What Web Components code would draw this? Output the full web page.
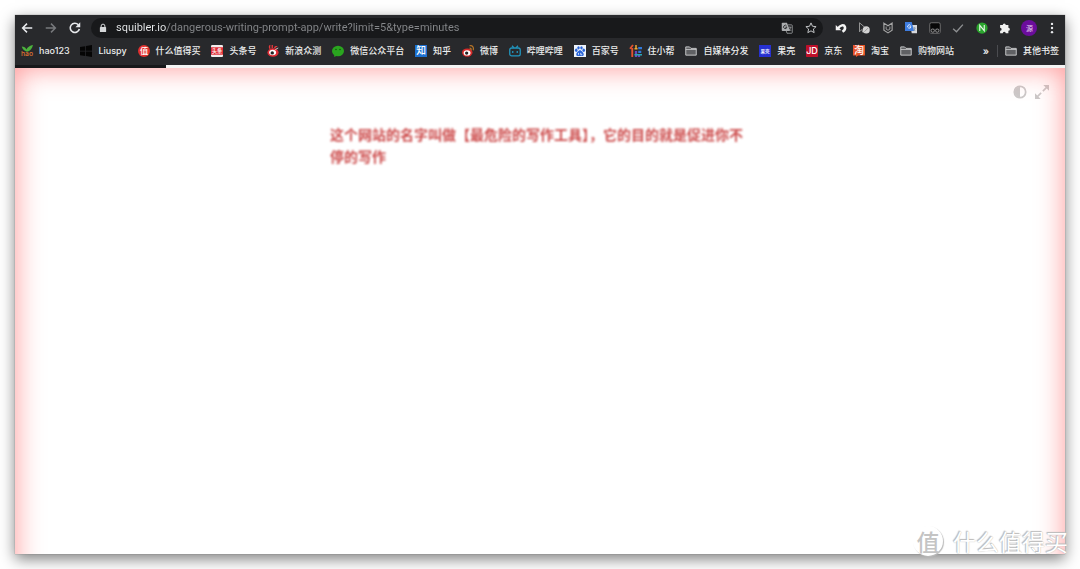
<!DOCTYPE html>
<html lang="zh-CN">
<head>
<meta charset="utf-8">
<meta name="viewport" content="width=device-width, initial-scale=1">
<title>squibler.io</title>
<style>
  body {
    margin: 0;
    padding: 15px;
    min-height: 100vh;
    box-sizing: border-box;
    display: flex;
    background: #fff;
    font-family: Inter, "Noto Sans CJK SC", sans-serif;
    overflow: hidden;
    position: relative;
  }
</style>
</head>
<body>
<browser-window>
  <browser-toolbar slot="chrome"></browser-toolbar>
  <bookmark-bar slot="chrome">
    <bookmark-link icon="hao">hao123</bookmark-link>
    <bookmark-link icon="windows">Liuspy</bookmark-link>
    <bookmark-link icon="zhi">什么值得买</bookmark-link>
    <bookmark-link icon="toutiao">头条号</bookmark-link>
    <bookmark-link icon="sina">新浪众测</bookmark-link>
    <bookmark-link icon="wechat">微信公众平台</bookmark-link>
    <bookmark-link icon="zhihu">知乎</bookmark-link>
    <bookmark-link icon="weibo">微博</bookmark-link>
    <bookmark-link icon="bili">哔哩哔哩</bookmark-link>
    <bookmark-link icon="baidu">百家号</bookmark-link>
    <bookmark-link icon="zhu">住小帮</bookmark-link>
    <bookmark-link icon="folder">自媒体分发</bookmark-link>
    <bookmark-link icon="guokr">果壳</bookmark-link>
    <bookmark-link icon="jd">京东</bookmark-link>
    <bookmark-link icon="taobao">淘宝</bookmark-link>
    <bookmark-link icon="folder">购物网站</bookmark-link>
    <bookmark-link slot="other" icon="folder">其他书签</bookmark-link>
  </bookmark-bar>
  <writing-page></writing-page>
</browser-window>
<site-watermark>什么值得买</site-watermark>

<script>
const ICONS = {
  back: '<path d="M14 8H3M8 3 3 8l5 5" fill="none" stroke="currentColor" stroke-width="1.7"/>',
  forward: '<path d="M2 8h11M8 3l5 5-5 5" fill="none" stroke="currentColor" stroke-width="1.7"/>',
  reload: '<path d="M13 9.2A5.3 5.3 0 1 1 11.8 4.3" fill="none" stroke="currentColor" stroke-width="1.8"/><path d="M14 1.5V7H8.5z" fill="currentColor"/>',
  lock: '<path d="M5 7V4.8a3 3 0 0 1 6 0V7" fill="none" stroke="currentColor" stroke-width="1.6"/><rect x="3" y="6.5" width="10" height="8" rx="1" fill="currentColor"/>',
  translate: '<path d="M2 1h6l4 11H2a1 1 0 0 1-1-1V2a1 1 0 0 1 1-1z" fill="#aaacae"/><path d="M7.6 5.6A2.2 2.2 0 1 0 7.8 7H5.7" fill="none" stroke="#18191b" stroke-width="1.1"/><path d="M9 3.8h5a1 1 0 0 1 1 1V14a1 1 0 0 1-1 1H8l-1-3" fill="none" stroke="#aaacae"/><path d="M9.5 7H14M11.8 6v1m1.2 0c-.4 2-1.5 3.4-3 4.6M11 9l2.6 3" stroke="#aaacae" fill="none" stroke-width=".9"/>',
  star: '<path d="M8 1.2l2 4.5 4.8.5-3.6 3.200 1 4.800L8 11.800l-4.200 2.400 1-4.800L1.200 6.200 6 5.700z" fill="none" stroke="#c4c6c8" stroke-width="1.3"/>',
  undo: '<path d="M1 4v7h7.500" fill="#f4f4f4"/><path d="M4 8.500C7 4 12 3 13.200 6.500 14 9 12.500 11.500 10 13" fill="none" stroke="#f4f4f4" stroke-width="3.400"/>',
  cursor: '<path d="M2 1v12l3-3 1.500 4M2 1l8 7" fill="none" stroke="#aaa" stroke-width="1.1"/><circle cx="11" cy="10.500" r="4.700" fill="#d3d3d3"/><path d="M8.500 13l5-5" stroke="#888" stroke-width="1"/>',
  shield: '<path d="M2.500 1.500 8 5l5.500-3.500V11L8 14.500 2.500 11z" fill="none" stroke="#a6a6a6" stroke-width="1.500"/><path d="M5.500 6v3.500L8 11l2.500-1.500V6" fill="none" stroke="#a6a6a6" stroke-width="1.200"/>',
  gtrans: '<path d="M7 4h9v11H9z" fill="#d6d8dc"/><path d="M0 0h9l3 12H0z" fill="#3e7de0"/><path d="M7.500 4.700a2.200 2.200 0 1 0 .4 1.600H6" fill="none" stroke="#fff" stroke-width="1.100"/><path d="M11 8h3m-1.500-1v1m1 0-2 4m0-3 2 3" fill="none" stroke="#67809c" stroke-width=".8"/>',
  monkey: '<rect x="1" y="1" width="14" height="14" rx="2" fill="#080808" stroke="#888"/><path d="M1.500 9h13v5.500h-13z" fill="#28292c"/><circle cx="5" cy="11.500" r="2.200" fill="#151515" stroke="#aaa"/><circle cx="11" cy="11.500" r="2.200" fill="#151515" stroke="#aaa"/>',
  check: '<path d="M1.500 9 6 13 14.500 3.500" fill="none" stroke="#8e9092" stroke-width="1.800"/>',
  neat: '<circle cx="8" cy="8" r="7.500" fill="#2ba52e"/><path d="M5 12V4.500l6 7V4" fill="none" stroke="#e8f5e8" stroke-width="1.500"/>',
  puzzle: '<path d="M1.500 4H5a2 2 0 1 1 4 0h3.500v3.500a2 2 0 1 1 0 4V15H9a2 2 0 0 0-4 0H1.500v-3.500a2 2 0 0 0 0-4z" fill="#f1f1f1"/>',
  avatar: '<circle cx="8" cy="8" r="8" fill="#6b0d9c"/><text x="8" y="10.800" font-size="7" text-anchor="middle" fill="#e6cfee">源</text>',
  dots: '<g fill="#e8eaed"><circle cx="8" cy="2.500" r="1.600"/><circle cx="8" cy="8" r="1.600"/><circle cx="8" cy="13.500" r="1.600"/></g>',
  folder: '<path d="M1 13.500v-11h5L8 4.500h7v9z" fill="#606164" stroke="#d0d1d3" stroke-width="1.200"/><path d="M1 6h14" stroke="#d0d1d3"/>',
  hao: '<path d="M1 2c3 0 5 1 6 4 2-4 5-5 9-6-1 5-4 8-8 9C5 8 2 6 1 2z" fill="#4cb23d"/><text x="8" y="15" font-size="9" font-weight="500" text-anchor="middle" fill="#df7431">hao</text>',
  windows: '<path d="M0 2.500 7 1.500V7.500H0zM8 1.400 16 0v7.500H8zM0 8.500h7v6L0 13.500zM8 8.500h8V16l-8-1.400z" fill="#050505"/>',
  zhi: '<circle cx="8" cy="8" r="8" fill="#e0302d"/><text x="8" y="12" font-size="11" text-anchor="middle" fill="#fff">值</text>',
  toutiao: '<rect width="16" height="16" rx="1.500" fill="#f3eeee"/><path d="M0 3h16v10H0z" fill="#e22d36"/><text x="8" y="10.800" font-size="7" font-weight="500" text-anchor="middle" fill="#fff">头条</text>',
  sina: '<path d="M4 5C3 3 3 1 4.500.5M7 4V0M10 4c1-2 3-2 3-1.500" stroke="#e4393c" stroke-width="1.800" fill="none"/><ellipse cx="8" cy="10" rx="7.500" ry="5.800" fill="#de2c35"/><ellipse cx="7.500" cy="10" rx="4.600" ry="3.700" fill="#fff"/><circle cx="7" cy="10.500" r="2.300" fill="#222"/><path d="M11 6l4-2" stroke="#eee"/>',
  wechat: '<ellipse cx="8" cy="8" rx="8" ry="7" fill="#2aa51f"/><path d="M3 12v4l4-2z" fill="#2aa51f"/><circle cx="5.300" cy="6" r="1.100" fill="#14550f"/><circle cx="10.700" cy="6" r="1.100" fill="#14550f"/>',
  zhihu: '<path d="M0 0h16v16H0z" fill="#1d70cf"/><text x="8" y="12.500" font-size="13" text-anchor="middle" fill="#fff">知</text>',
  weibo: '<ellipse cx="7" cy="10" rx="7" ry="5.500" fill="#d52b2a"/><ellipse cx="6.800" cy="10.500" rx="4.600" ry="3.400" fill="#fff"/><circle cx="6.200" cy="10.800" r="2.200" fill="#222"/><path d="M10 1c4-1 6 2 5 6M10 4c2 0 2.500 1 2 3" stroke="#b87527" stroke-width="1.600" fill="none"/>',
  bili: '<rect x="1" y="4" width="14" height="10.500" rx="2.500" fill="none" stroke="#2196c0" stroke-width="1.700"/><path d="M4 1l2.500 2.500M12 1 9.500 3.500M5 8v2.500M11 8v2.500" stroke="#2196c0" stroke-width="1.700"/>',
  baidu: '<path d="M0 0h16v16H0z" fill="#eef4fc"/><g fill="#2864d9"><ellipse cx="3" cy="7" rx="1.700" ry="2.200"/><ellipse cx="6" cy="3.700" rx="1.600" ry="2.200"/><ellipse cx="10" cy="3.700" rx="1.600" ry="2.200"/><ellipse cx="13" cy="7" rx="1.700" ry="2.200"/><path d="M8 7c2 0 5 3.500 5 5.500 0 3-3 2-5 2s-5 1-5-2C3 10.500 6 7 8 7z"/></g><path d="M6 10.500v2.500M9 10.500V13h2" stroke="#fff" fill="none"/>',
  zhu: '<path d="M4 0 0 5M3 4v12" stroke="#e4522f" stroke-width="2.500"/><path d="M8 0v4M6 5h4" stroke="#efa936" stroke-width="2"/><path d="M11 4h5M11 9h4" stroke="#2f79db" stroke-width="3"/><path d="M8 8v8M12 12v4" stroke="#6549bd" stroke-width="3"/><path d="M6 13h10" stroke="#27a8b6" stroke-width="2"/>',
  guokr: '<path d="M0 0h16v16H0z" fill="#2731d1"/><text x="8" y="10.500" font-size="6" font-weight="500" text-anchor="middle" fill="#fff">果壳</text>',
  jd: '<rect width="16" height="16" rx="1" fill="#bd1029"/><text x="8" y="12.300" font-size="12" text-anchor="middle" fill="#fff">JD</text>',
  taobao: '<path d="M0 0h16v14H7l-3 2v-2H0z" fill="#e65329"/><text x="8" y="12" font-size="13" font-weight="500" text-anchor="middle" fill="#fff">淘</text>',
  contrast: '<circle cx="8" cy="8" r="6.500" fill="none" stroke="currentColor" stroke-width="2"/><path d="M8 2v12A6 6 0 0 1 8 2z" fill="currentColor"/>',
  expand: '<path d="M9.500 0H16v6.500zM0 9.500V16h6.500z" fill="currentColor"/><path d="M14 2 9 7M7 9l-5 5" stroke="currentColor" stroke-width="2"/>'
};

function define(name, html, setup) {
  const template = document.createElement('template');
  template.innerHTML = html;
  customElements.define(name, class extends HTMLElement {
    connectedCallback() {
      if (this.shadowRoot) return;
      const root = this.attachShadow({ mode: 'open' });
      root.append(template.content.cloneNode(true));
      if (setup) setup(this, root);
    }
  });
}

function placeIcon(host, root) {
  const icon = document.createElement('ui-icon');
  icon.setAttribute('name', host.getAttribute('icon'));
  root.querySelector('button, a').prepend(icon);
}

define('ui-icon', `
  <style>
    :host { display: block; flex: none; width: var(--icon-size, 12px); height: var(--icon-size, 12px); }
    svg { display: block; width: 100%; height: 100%; overflow: visible; }
  </style>
  <svg viewBox="0 0 16 16" aria-hidden="true"></svg>`,
  (host, root) => { root.querySelector('svg').innerHTML = ICONS[host.getAttribute('name')] || ''; });

define('icon-button', `
  <style>
    :host { display: block; flex: none; }
    button { display: grid; place-items: center; width: 100%; height: 20px; margin: 0; padding: 0; border: 0; background: none; color: inherit; cursor: pointer; }
  </style>
  <button type="button"></button>`,
  (host, root) => {
    placeIcon(host, root);
    root.querySelector('button').setAttribute('aria-label', host.getAttribute('label'));
  });

define('browser-window', `
  <style>
    :host { display: flex; flex-direction: column; flex: 1; min-width: 0; background: #fff; box-shadow: 0 0 1px #777, 0 5px 14px rgba(0,0,0,.5); }
    header { display: block; background: #28292c; color: #e8eaed; }
    ::slotted(writing-page) { flex: 1; }
  </style>
  <header><slot name="chrome"></slot></header>
  <slot></slot>`);

define('browser-toolbar', `
  <style>
    :host { display: flex; align-items: center; height: 26px; }
    .nav { display: grid; grid-template-columns: repeat(3, 24px); width: 76px; color: #e8eaed; --icon-size: 14px; }
    .off { color: #77797c; }
    .omnibox { display: flex; align-items: center; flex: 1; min-width: 0; height: 20px; border-radius: 10px; background: #18191b; padding: 0 0 0 7px; }
    .omnibox ui-icon { --icon-size: 10px; color: #d4d6d8; }
    input { flex: 1; min-width: 0; height: 20px; margin: 0 0 0 8px; padding: 0; border: 0; outline: 0; font: 11px/20px Roboto, sans-serif; color: #8b8d90;
      background: linear-gradient(90deg, #eceef0 0 51px, #85878a 51px); -webkit-background-clip: text; background-clip: text; -webkit-text-fill-color: transparent; }
    .omnibox icon-button { width: 24px; }
    .tools { display: grid; grid-template-columns: repeat(10, 1fr); width: 235px; margin: 0 1px 0 6px; }
    .avatar { --icon-size: 16px; }
  </style>
  <div class="nav">
    <icon-button icon="back" label="后退"></icon-button>
    <icon-button class="off" icon="forward" label="前进"></icon-button>
    <icon-button icon="reload" label="重新加载"></icon-button>
  </div>
  <div class="omnibox">
    <ui-icon name="lock"></ui-icon>
    <input type="text" aria-label="地址" spellcheck="false" value="squibler.io/dangerous-writing-prompt-app/write?limit=5&amp;type=minutes">
    <icon-button icon="translate" label="翻译"></icon-button>
    <icon-button icon="star" label="收藏"></icon-button>
  </div>
  <div class="tools">
    <icon-button icon="undo" label="撤销"></icon-button>
    <icon-button icon="cursor" label="选择"></icon-button>
    <icon-button icon="shield" label="安全"></icon-button>
    <icon-button icon="gtrans" label="谷歌翻译"></icon-button>
    <icon-button icon="monkey" label="脚本"></icon-button>
    <icon-button icon="check" label="任务"></icon-button>
    <icon-button icon="neat" label="下载"></icon-button>
    <icon-button icon="puzzle" label="扩展程序"></icon-button>
    <icon-button class="avatar" icon="avatar" label="用户"></icon-button>
    <icon-button icon="dots" label="菜单"></icon-button>
  </div>`);

define('bookmark-bar', `
  <style>
    :host { display: flex; align-items: center; height: 20px; padding: 0 6px 4px; }
    nav { display: flex; justify-content: space-between; flex: 1; min-width: 0; }
    .more { width: 18px; height: 20px; margin: 0 0 0 23px; padding: 0; border: 0; background: none; color: #e8eaed; font: 600 10px/16px Inter, sans-serif; }
    .rule { width: 1px; height: 12px; margin: 0 7px 0 2px; background: #4b4c50; }
  </style>
  <nav aria-label="书签"><slot></slot></nav>
  <button class="more" type="button" aria-label="更多书签">»</button>
  <span class="rule"></span>
  <slot name="other"></slot>`);

define('bookmark-link', `
  <style>
    :host { display: block; flex: none; }
    a { display: flex; align-items: center; gap: 6px; height: 20px; color: #eceded; text-decoration: none; white-space: nowrap; font: 500 9px/20px Inter, "Noto Sans CJK SC", sans-serif; }
  </style>
  <a href="#"><span><slot></slot></span></a>`, placeIcon);

define('writing-page', `
  <style>
    :host { display: flex; flex-direction: column; min-height: 0; }
    progress { appearance: none; -webkit-appearance: none; display: block; width: 100%; height: 3px; border: 0; background: #f4f4f4; }
    progress::-webkit-progress-bar { background: #f4f4f4; }
    progress::-webkit-progress-value { background: #17181a; }
    main { position: relative; overflow: hidden; flex: 1; display: grid; grid-template-columns: 1fr minmax(0, 420px) 1fr; padding: 0 12px; }
    .danger { position: absolute; inset: 0 0 -60px; box-shadow: inset 0 0 28px rgba(255,80,80,.6); pointer-events: none; }
    textarea { grid-column: 2; margin: 55px 0 0; padding: 0; border: 0; outline: 0; resize: none; overflow: hidden; background: none; color: #cc4a4a; font: 700 14px/22px "Noto Sans CJK SC", sans-serif; filter: blur(1px); }
    .actions { display: flex; justify-content: flex-end; align-items: start; padding-top: 14px; color: #cbc9c9; --icon-size: 14px; }
    .actions icon-button { width: 22px; }
  </style>
  <progress max="1000" value="144" aria-label="写作进度"></progress>
  <main>
    <div class="danger"></div>
    <textarea aria-label="写作内容" spellcheck="false">这个网站的名字叫做【最危险的写作工具】，它的目的就是促进你不停的写作</textarea>
    <div class="actions">
      <icon-button icon="contrast" label="夜间模式"></icon-button>
      <icon-button icon="expand" label="全屏"></icon-button>
    </div>
  </main>`);

define('site-watermark', `
  <style>
    :host { position: absolute; right: 12px; bottom: 12px; display: flex; align-items: center; gap: 10px; height: 32px; color: #fff; font: 23px/32px "Noto Sans CJK SC", sans-serif; text-shadow: 0 0 1px #aaa, -1px -1px 1px #bbb; pointer-events: none; }
    .seal { display: grid; place-items: center; width: 30px; height: 30px; border-radius: 50%; background: #fff; box-shadow: 1px 1px 1px #bbb; color: #c4c4c4; font: 500 23px/30px "Noto Sans CJK SC", sans-serif; text-shadow: none; }
  </style>
  <span class="seal">值</span><span><slot></slot></span>`);
</script>
</body>
</html>
